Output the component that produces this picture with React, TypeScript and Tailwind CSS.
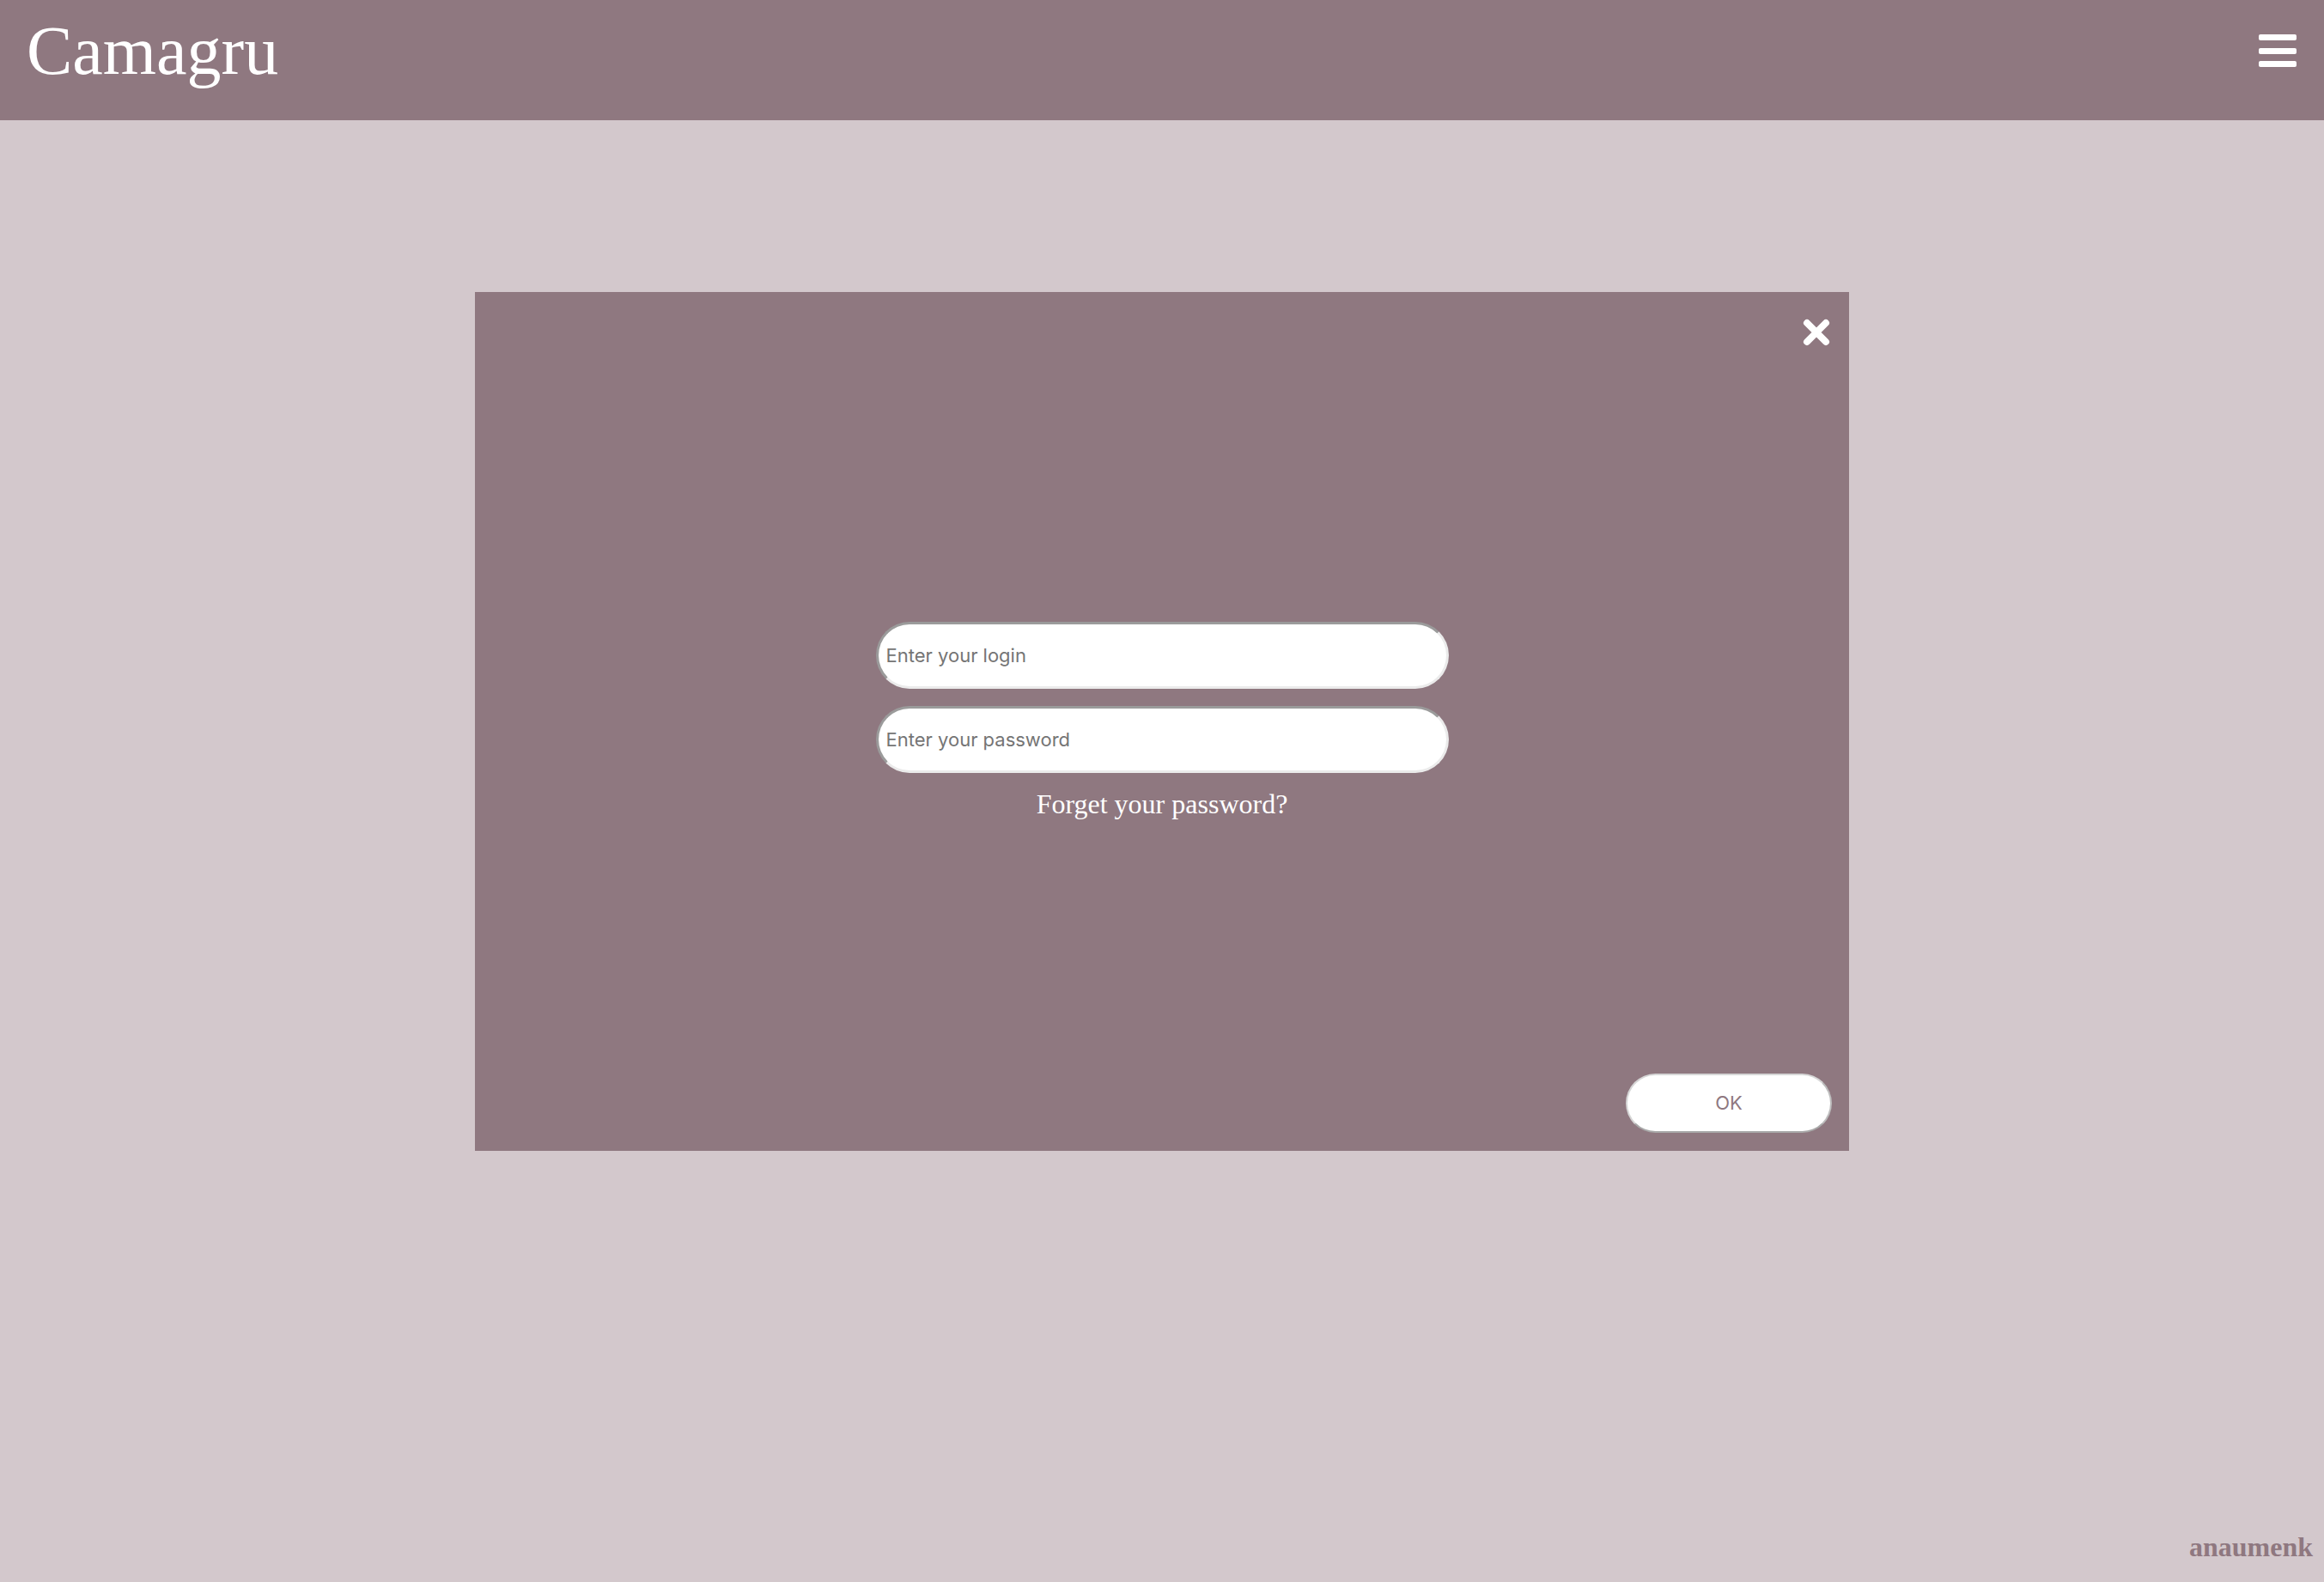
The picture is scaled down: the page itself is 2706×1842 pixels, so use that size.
import { useState } from 'react';

const SERIF = "font-['Liberation_Serif','Times_New_Roman',serif]";

function CloseIcon() {
  return (
    <svg width="34" height="34" viewBox="0 0 34 34" aria-hidden="true">
      <path d="M6 6 L28 28 M28 6 L6 28" stroke="#ffffff" strokeWidth="8" strokeLinecap="round" />
    </svg>
  );
}

function Header() {
  return (
    <header className="flex h-[140px] w-full shrink-0 items-start justify-between bg-[#8f7880]">
      <h1 className={`${SERIF} pl-[31px] pt-[19px] text-[80px] leading-none font-normal text-white`}>
        Camagru
      </h1>
      {/* menu */}
      <button className="mr-[32px] mt-[40px] flex flex-col gap-[8.5px]" aria-label="menu">
        <span className="block h-[7px] w-[44px] rounded-[2px] bg-white" />
        <span className="block h-[7px] w-[44px] rounded-[2px] bg-white" />
        <span className="block h-[7px] w-[44px] rounded-[2px] bg-white" />
      </button>
    </header>
  );
}

function Field({ placeholder, type }: { placeholder: string; type: string }) {
  return (
    <input
      type={type}
      placeholder={placeholder}
      className="h-[78px] w-[667px] rounded-full border-[3px] border-t-[#9b9b9b] border-l-[#9b9b9b] border-r-[#ebebeb] border-b-[#ebebeb] bg-white pl-[9px] font-['Inter',sans-serif] text-[22px] text-[#555] outline-none placeholder:text-[#757575]"
    />
  );
}

function LoginModal() {
  const [login, setLogin] = useState('');
  return (
    <div className="relative mx-auto mt-[200px] flex h-[1000px] w-[1600px] flex-col items-center bg-[#8f7880] pt-[384px]">
      <button className="absolute right-[21px] top-[30px]" aria-label="close">
        <CloseIcon />
      </button>

      <form className="flex flex-col items-center gap-[20px]" onSubmit={(e) => e.preventDefault()}>
        <Field placeholder="Enter your login" type="text" />
        <Field placeholder="Enter your password" type="password" />
      </form>
      <a
        href="#"
        onClick={() => setLogin(login)}
        className={`${SERIF} mt-[12px] text-[32px] text-white`}
      >
        Forget your password?
      </a>

      <button className="mb-[21px] mr-[20px] mt-auto h-[69px] w-[240px] self-end rounded-full border-2 border-[#d6d6d6] border-b-[#a9a9a9] border-r-[#bdbdbd] bg-white font-['Inter',sans-serif] text-[22px] text-[#8f7880]">
        OK
      </button>
    </div>
  );
}

export default function App() {
  return (
    <div className="flex min-h-[1842px] w-full flex-col bg-[#d3c8cc]">
      <Header />
      <LoginModal />
      <footer className={`${SERIF} mt-auto self-end pb-[17px] pr-[13px] text-[32px] font-bold text-[#8f7880]`}>
        anaumenk
      </footer>
    </div>
  );
}
